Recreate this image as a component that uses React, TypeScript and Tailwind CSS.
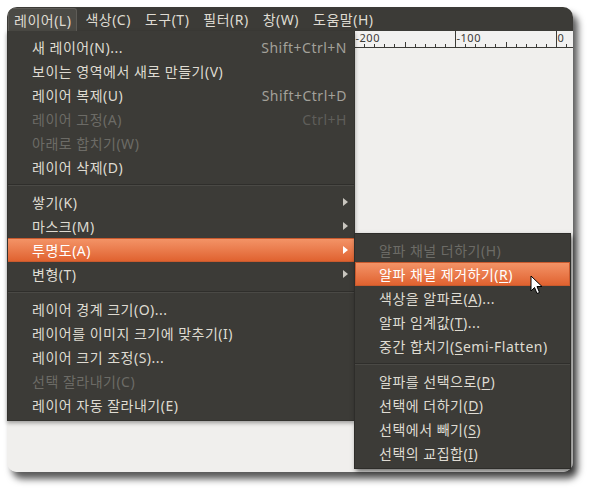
import React from "react";

type Item =
  | { sep: true }
  | { t: string; sc?: string; dis?: boolean; sub?: boolean; active?: boolean };

const mainItems: Item[] = [
  { t: "새 레이어(N)...", sc: "Shift+Ctrl+N" },
  { t: "보이는 영역에서 새로 만들기(V)" },
  { t: "레이어 복제(U)", sc: "Shift+Ctrl+D" },
  { t: "레이어 고정(A)", sc: "Ctrl+H", dis: true },
  { t: "아래로 합치기(W)", dis: true },
  { t: "레이어 삭제(D)" },
  { sep: true },
  { t: "쌓기(K)", sub: true },
  { t: "마스크(M)", sub: true },
  { t: "투명도(A)", sub: true, active: true },
  { t: "변형(T)", sub: true },
  { sep: true },
  { t: "레이어 경계 크기(O)..." },
  { t: "레이어를 이미지 크기에 맞추기(I)" },
  { t: "레이어 크기 조정(S)..." },
  { t: "선택 잘라내기(C)", dis: true },
  { t: "레이어 자동 잘라내기(E)" },
];

type SubItem =
  | { sep: true }
  | { pre: string; u: string; post: string; dis?: boolean; active?: boolean };

const subItems: SubItem[] = [
  { pre: "알파 채널 더하기(", u: "H", post: ")", dis: true },
  { pre: "알파 채널 제거하기(", u: "R", post: ")", active: true },
  { pre: "색상을 알파로(", u: "A", post: ")..." },
  { pre: "알파 임계값(", u: "T", post: ")..." },
  { pre: "중간 합치기(", u: "S", post: "emi-Flatten)" },
  { sep: true },
  { pre: "알파를 선택으로(", u: "P", post: ")" },
  { pre: "선택에 더하기(", u: "D", post: ")" },
  { pre: "선택에서 빼기(", u: "S", post: ")" },
  { pre: "선택의 교집합(", u: "I", post: ")" },
];

const menubar = ["레이어(L)", "색상(C)", "도구(T)", "필터(R)", "창(W)", "도움말(H)"];

function Arrow({ white }: { white?: boolean }) {
  return (
    <svg width="5" height="8" viewBox="0 0 5 8" className="shrink-0">
      <path d="M0 0 L5 4 L0 8 Z" fill={white ? "#ffffff" : "#c9c6bf"} />
    </svg>
  );
}

function Separator() {
  return (
    <div className="h-[11px] flex flex-col justify-center">
      <div className="h-px bg-[#2f2e2b]" />
      <div className="h-px bg-[#4a4945]" />
    </div>
  );
}

function Ruler() {
  const ticks: React.ReactNode[] = [];
  const unit = 1.01;
  for (let v = -200; v <= 20; v += 10) {
    const x = Math.round(549 + v * unit) + 0.5;
    if (v % 100 === 0) {
      ticks.push(<line key={v} x1={x} y1={0} x2={x} y2={17} stroke="#3c3b37" strokeWidth={1} />);
      ticks.push(
        <text key={"t" + v} x={x + 1} y={11} fontSize={11} fill="#3c3b37" fontFamily="'Noto Sans', sans-serif">
          {v}
        </text>
      );
    } else {
      const h = v % 50 === 0 ? 6 : 4;
      ticks.push(<line key={v} x1={x} y1={17 - h} x2={x} y2={17} stroke="#3c3b37" strokeWidth={1} />);
    }
  }
  return (
    <svg width="566" height="17" className="block shrink-0">
      <rect x="0" y="0" width="566" height="17" fill="#f2f1f0" />
      {ticks}
      <line x1="0" y1="16.5" x2="566" y2="16.5" stroke="#3c3b37" />
    </svg>
  );
}

function Cursor() {
  return (
    <svg width="14" height="21" viewBox="0 0 14 21" className="absolute left-[530px] top-[275px]">
      <path
        d="M1 1 L1 16 L4.5 12.5 L7 18.5 L9.5 17.5 L7 11.5 L12 11.5 Z"
        fill="#ffffff"
        stroke="#000000"
        strokeWidth="1"
        strokeLinejoin="round"
      />
    </svg>
  );
}

export default function App() {
  return (
    <div className="relative w-[596px] h-[495px] bg-white overflow-hidden font-['Noto_Sans','Noto_Sans_CJK_KR',sans-serif] text-[14px] tracking-[0.5px]">
      {/* window */}
      <div className="absolute left-[7px] top-[7px] w-[566px] h-[465px] rounded-[10px] overflow-hidden shadow-[5px_7px_7px_rgba(0,0,0,0.65)] bg-[#f0efed] flex flex-col">
        <div className="h-[24px] bg-[#3c3b37] flex items-end pl-px shrink-0 gap-[2px]">
          {menubar.map((m, i) => (
            <div
              key={m}
              className={
                i === 0
                  ? "h-[23px] px-[5px] flex items-center text-[#dfdbd2] bg-[#4b4a45] border border-b-0 border-[#5e5c57] rounded-t-[3px]"
                  : "h-[23px] px-[6px] flex items-center text-[#dfdbd2]"
              }
            >
              {m}
            </div>
          ))}
        </div>
        <Ruler />
        <div className="flex-1 bg-[#f0efed]" />
      </div>

      {/* main dropdown */}
      <div className="absolute left-[7px] top-[31px] w-[348px] h-[390px] bg-[#3c3b37] border-x border-b border-[#34332f] py-[4px] shadow-[0_2px_4px_rgba(0,0,0,0.35)]">
        {mainItems.map((it, i) =>
          "sep" in it ? (
            <Separator key={i} />
          ) : (
            <div
              key={i}
              className={
                it.active
                  ? "h-[24px] flex items-center pl-[24px] pr-[6px] text-white bg-gradient-to-b from-[#f39366] to-[#e0622f] border-y border-[#c95a2e]"
                  : "h-[24px] flex items-center pl-[24px] pr-[6px] " + (it.dis ? "text-[#6c6b66]" : "text-[#dfdbd2]")
              }
            >
              <span className="flex-1 whitespace-nowrap">{it.t}</span>
              {it.sc && (
                <span className={"whitespace-nowrap mr-[1px] " + (it.dis ? "text-[#5f5e5a]" : "text-[#a3a19a]")}>{it.sc}</span>
              )}
              {it.sub && <Arrow white={it.active} />}
            </div>
          )
        )}
      </div>

      {/* submenu */}
      <div className="absolute left-[354px] top-[233px] w-[217px] h-[236px] bg-[#3c3b37] border border-[#2e2d2a] pt-[4px] shadow-[2px_3px_5px_rgba(0,0,0,0.5)]">
        {subItems.map((it, i) =>
          "sep" in it ? (
            <Separator key={i} />
          ) : (
            <div
              key={i}
              className={
                it.active
                  ? "h-[24px] flex items-center pl-[23px] text-white bg-gradient-to-b from-[#f39366] to-[#e0622f] border border-[#c95a2e]"
                  : "h-[24px] flex items-center pl-[24px] " + (it.dis ? "text-[#6c6b66]" : "text-[#dfdbd2]")
              }
            >
              <span className="whitespace-nowrap">
                {it.pre}
                <span className={it.dis ? "" : "underline underline-offset-2"}>{it.u}</span>
                {it.post}
              </span>
            </div>
          )
        )}
      </div>

      <Cursor />
    </div>
  );
}
